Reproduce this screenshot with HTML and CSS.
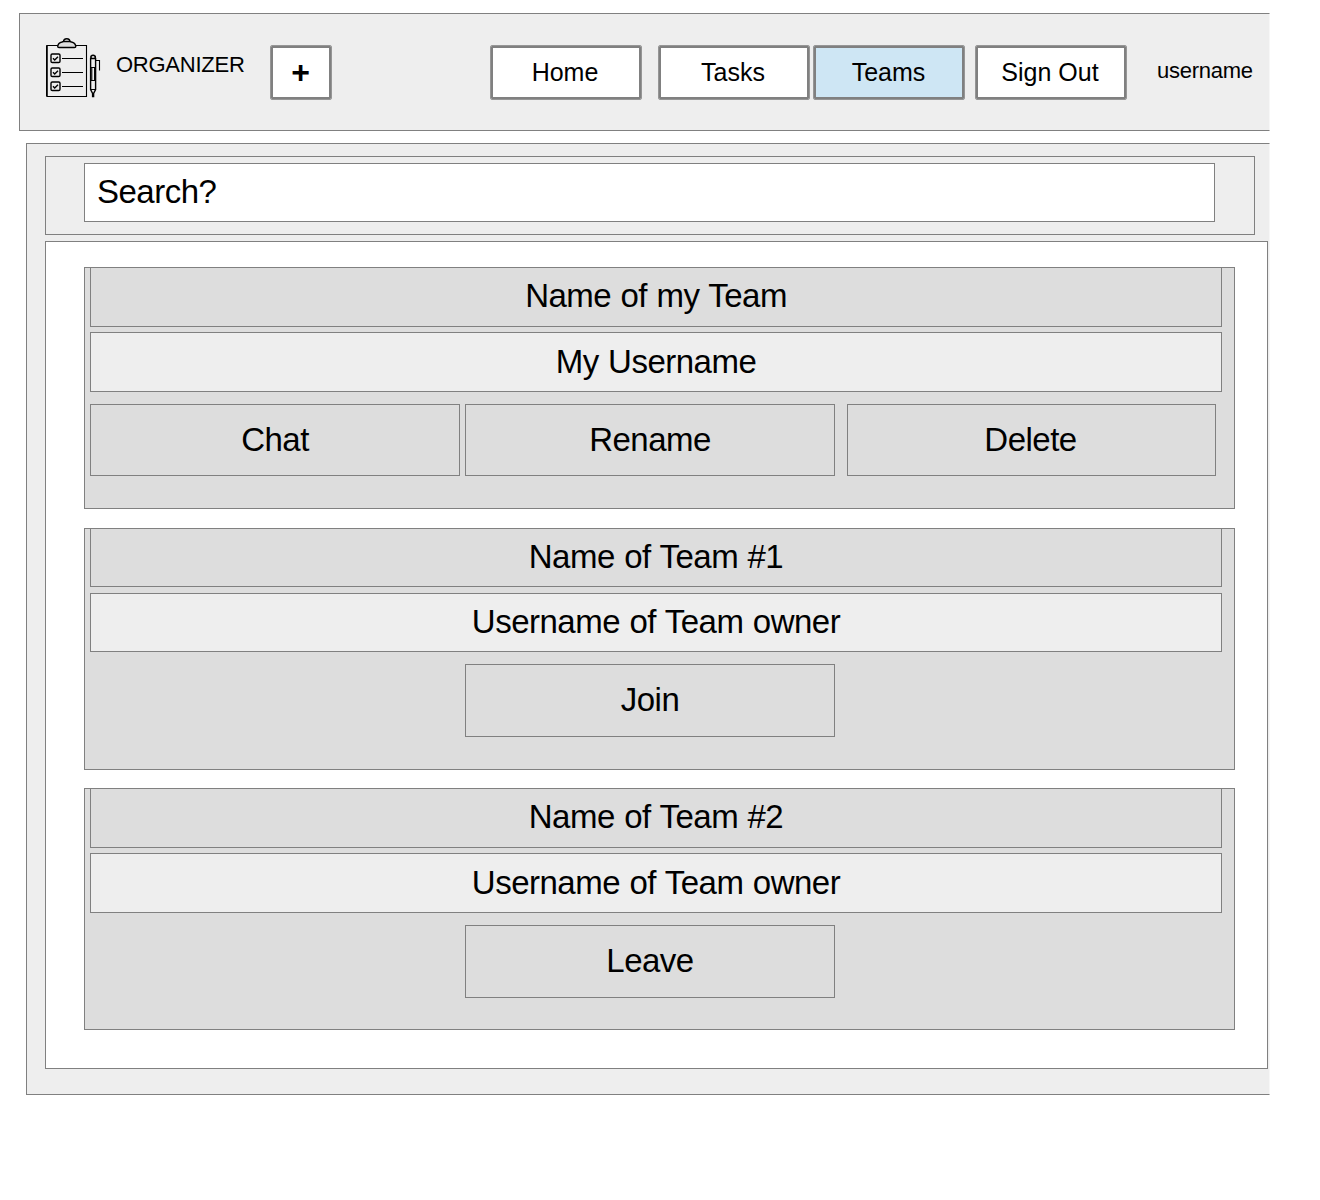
FILE: index.html
```html
<!DOCTYPE html>
<html lang="en">
<head>
<meta charset="utf-8">
<title>Organizer - Teams</title>
<link rel="stylesheet" href="styles.css">
</head>
<body>
<header class="topbar">
  <svg class="logo" width="57" height="62" viewBox="0 0 57 62" fill="none" stroke="#000" stroke-width="1.1">
    <path d="M1.9 59.5V8.5H41.5V59.5H1.9"/>
    <path d="M1.8 8.5V59.5" stroke-width="1.6"/>
    <path d="M18.5 5C18.5 .6 25 .6 25 5" stroke-width="1.4"/>
    <path d="M12.7 9.5C13 6.5 14.5 5.5 17 5L18.5 4.5H25L26.5 5C29 5.5 30.5 6.5 30.8 9.5C30.8 10.3 30 10.5 29.5 10.5H14C13.2 10.5 12.7 10.3 12.7 9.5Z" fill="#ddd" stroke-width="1.4"/>
    <g stroke-width="1.4">
      <rect x="6" y="17" width="9" height="8.5" rx="1.3"/>
      <rect x="6" y="31" width="9" height="8.5" rx="1.3"/>
      <rect x="6" y="45" width="9" height="8.5" rx="1.3"/>
      <path d="M8 21.3l1.7 1.7L13 19.8M8 35.3l1.7 1.7L13 33.8M8 49.3l1.7 1.7L13 47.8"/>
    </g>
    <path d="M17 21.5H38M17 35.5H38M17 49.5H38"/>
    <path d="M45.6 21.5H50.6V52.5L48.6 56.5V59.5H47.6V56.5L45.6 52.5Z" stroke-width="1.4"/>
    <path d="M46 21V19.3Q48 17.2 50.2 19.3V21" stroke-width="1.6"/>
    <path d="M45.5 30.5H50.7M45.5 43.5H50.7M45.5 52.5H50.7M46.8 30.5V43.5M49.6 30.5V43.5M51 23.5H54.5V33.5"/>
  </svg>
  <span class="brand">ORGANIZER</span>
  <button class="btn add">+</button>
  <nav class="nav">
    <a class="btn">Home</a>
    <a class="btn tasks">Tasks</a>
    <a class="btn active">Teams</a>
    <a class="btn signout">Sign Out</a>
  </nav>
  <span class="user">username</span>
</header>
<main class="page">
  <div class="search"><div class="field">Search?</div></div>
  <section class="teams">
    <article class="card first">
      <h2 class="name">Name of my Team</h2>
      <p class="owner">My Username</p>
      <div class="actions"><a class="act">Chat</a><a class="act">Rename</a><a class="act">Delete</a></div>
    </article>
    <article class="card second">
      <h2 class="name">Name of Team #1</h2>
      <p class="owner">Username of Team owner</p>
      <div class="actions"><a class="act middle">Join</a></div>
    </article>
    <article class="card third">
      <h2 class="name">Name of Team #2</h2>
      <p class="owner">Username of Team owner</p>
      <div class="actions"><a class="act middle">Leave</a></div>
    </article>
  </section>
</main>
</body>
</html>
```
FILE: styles.css
```css
* { box-sizing: border-box; }
body {
  margin: 0;
  padding: 13px 50px 0 19px;
  background: #fff;
  color: #000;
  font-family: "Liberation Sans", Arial, sans-serif;
}
.topbar {
  display: flex;
  align-items: flex-start;
  height: 118px;
  padding-left: 25px;
  background: #eee;
  border: 1px solid #808080;
  border-right: 1px solid #f7f7f7;
}
.logo { flex: none; margin-top: 23px; }
.brand {
  width: 155px;
  margin: 38px 0 0 14px;
  font-size: 22px;
  line-height: 26px;
  letter-spacing: -0.25px;
}
.btn {
  display: flex;
  justify-content: center;
  width: 152px;
  height: 55px;
  padding: 12px 2px 0 0;
  background: #fff;
  border: 1px solid #969696;
  border-radius: 2px;
  box-shadow: inset 0 0 0 2px #808080;
  color: #000;
  font: 25px/28px "Liberation Sans", Arial, sans-serif;
}
.add {
  width: 62px;
  margin: 31px 0 0 -1px;
  padding-right: 1px;
  font-weight: bold;
  font-size: 32px;
}
.nav { display: flex; margin: 31px 0 0 158px; }
.tasks { margin-left: 16px; }
.active { margin-left: 3px; padding-right: 1px; background: #cee6f4; }
.signout { margin-left: 10px; }
.user {
  margin: 44px 0 0 30px;
  font-size: 22px;
  line-height: 26px;
  letter-spacing: -0.25px;
}
.page {
  height: 952px;
  margin: 12px 0 0 7px;
  padding: 12px 0 0 18px;
  background: #eee;
  border: 1px solid #808080;
  border-right: 1px solid #f7f7f7;
  font-size: 33px;
  line-height: 38px;
  letter-spacing: -0.5px;
  word-spacing: 0.7px;
}
.search {
  width: 1210px;
  height: 79px;
  padding: 6px 0 0 38px;
  border: 1px solid #808080;
}
.field {
  width: 1131px;
  height: 59px;
  padding: 9px 12px;
  background: #fff;
  border: 1px solid #808080;
}
.teams {
  width: 1223px;
  height: 828px;
  margin-top: 6px;
  padding: 25px 32px 0 38px;
  background: #fff;
  border: 1px solid #808080;
}
.card {
  height: 242px;
  padding: 0 12px 0 5px;
  background: #ddd;
  border: 1px solid #808080;
}
.second { margin-top: 19px; }
.third { margin-top: 18px; }
.name, .owner {
  height: 60px;
  margin: 0;
  padding-top: 9px;
  border: 1px solid #808080;
  font-size: inherit;
  font-weight: normal;
  text-align: center;
}
.name { margin-top: -1px; }
.owner { margin-top: 5px; padding-top: 10px; background: #eee; }
.second .name, .second .owner { height: 59px; }
.second .owner { margin-top: 6px; padding-top: 9px; }
.actions {
  display: grid;
  grid-template-columns: 370px 370px 369px;
  grid-template-rows: 72px;
  column-gap: 5px;
  margin-top: 12px;
}
.second .actions, .third .actions { grid-template-rows: 73px; }
.act {
  padding-top: 16px;
  border: 1px solid #808080;
  text-align: center;
}
.act:nth-child(3) { margin: 0 -7px 0 7px; padding-right: 2px; }
.middle { grid-column: 2; }
```
